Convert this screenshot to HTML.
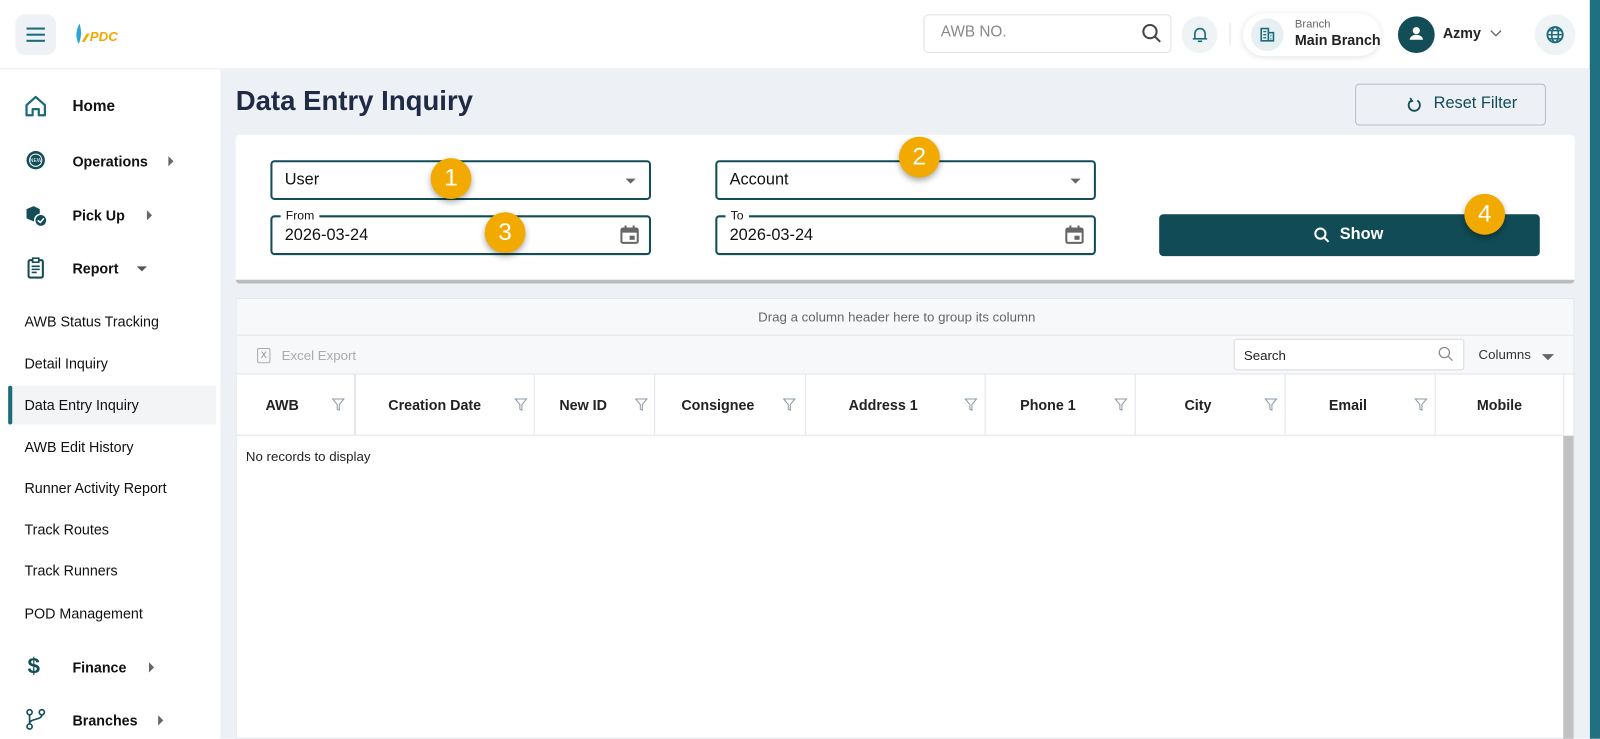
<!DOCTYPE html>
<html><head><meta charset="utf-8"><style>
html,body{margin:0;padding:0;width:1600px;height:739px;overflow:hidden;background:#fff;}
#s{position:absolute;left:0;top:0;width:1568px;height:724px;transform:scale(1.0204);transform-origin:0 0;font-family:"Liberation Sans",Arial,sans-serif;color:#111;}
.a{position:absolute;}
.nav{position:absolute;left:71px;font-size:14px;font-weight:bold;color:#111;}
.sub{position:absolute;left:24px;font-size:14px;color:#111;}
.tri-r{position:absolute;width:0;height:0;border-top:5px solid transparent;border-bottom:5px solid transparent;border-left:5px solid #666;}
.tri-d{position:absolute;width:0;height:0;border-left:5px solid transparent;border-right:5px solid transparent;border-top:5px solid #555;}
.field{position:absolute;border:2px solid #124d58;border-radius:4px;box-sizing:border-box;height:39px;font-size:16px;color:#111;}
.badge{position:absolute;width:40px;height:40px;border-radius:50%;background:#f2a900;color:#fff;font-size:24px;text-align:center;line-height:40px;box-shadow:0 3px 6px rgba(0,0,0,.35);}
.th{position:absolute;top:367px;height:60px;border-right:1px solid #e3e5ea;box-sizing:border-box;font-size:14px;font-weight:bold;color:#222;line-height:60px;text-align:center;}
.flt{position:absolute;top:23px;}
</style></head><body><div id="s">
<!-- header -->
<div class="a" style="left:0;top:0;width:1568px;height:67px;background:#fff;border-bottom:1px solid #e8eaee;"></div>
<div class="a" style="left:15px;top:14px;width:40px;height:40px;border-radius:10px;background:#eef2f6;"></div>
<div class="a" style="left:26px;top:27px;width:18px;height:2px;background:#1c6b7a;box-shadow:0 6px 0 #1c6b7a,0 12px 0 #1c6b7a;"></div>
<svg class="a" style="left:73px;top:22px" width="60" height="24"><path d="M5 1 C1 8 1 15 4 21 C7 15 7 8 5 1Z" fill="#2aa6d6"/><path d="M7 19 L12 11 L15 11 L10 19Z" fill="#f2a900"/><text x="15" y="18" font-family="Liberation Sans" font-weight="bold" font-style="italic" font-size="13" fill="#f2a900">PDC</text></svg>
<div class="a" style="left:905px;top:14px;width:243px;height:38px;border:1px solid #dde0e5;border-radius:5px;box-sizing:border-box;"></div>
<div class="a" style="left:922px;top:23px;font-size:15px;color:#888;">AWB NO.</div>
<svg class="a" style="left:1118px;top:22px" width="22" height="22"><circle cx="9" cy="9" r="6.5" fill="none" stroke="#444" stroke-width="2"/><path d="M14 14 L19 19" stroke="#444" stroke-width="2"/></svg>
<div class="a" style="left:1158px;top:16px;width:35px;height:36px;border-radius:50%;background:#eef3f6;"></div>
<svg class="a" style="left:1166px;top:24px" width="20" height="20"><path d="M5 14 V9 a5 5 0 0 1 10 0 V14 Z M3 14 H17 M8 16.5 H12" fill="none" stroke="#1c6b7a" stroke-width="1.6"/></svg>
<div class="a" style="left:1205px;top:22px;width:1px;height:22px;background:#e2e4e8;"></div>
<div class="a" style="left:1218px;top:13px;width:135px;height:42px;border-radius:21px;background:#fff;box-shadow:0 1px 6px rgba(0,0,0,.12);"></div>
<div class="a" style="left:1226px;top:18px;width:32px;height:32px;border-radius:50%;background:#e6f0f3;"></div>
<svg class="a" style="left:1234px;top:26px" width="16" height="16"><path d="M2 2 H9 V14 H2Z M9 6 H14 V14 H9" fill="none" stroke="#1c6b7a" stroke-width="1.6"/><path d="M4 5 H7 M4 8 H7 M4 11 H7 M11 9 H12 M11 12 H12" stroke="#1c6b7a" stroke-width="1.3"/></svg>
<div class="a" style="left:1269px;top:18px;font-size:11px;color:#666;">Branch</div>
<div class="a" style="left:1269px;top:31px;font-size:14px;font-weight:bold;color:#222;">Main Branch</div>
<div class="a" style="left:1370px;top:16px;width:36px;height:36px;border-radius:50%;background:#124d58;"></div>
<svg class="a" style="left:1378px;top:23px" width="20" height="20"><circle cx="10" cy="7" r="3.5" fill="#fff"/><path d="M3.5 16 a6.5 5 0 0 1 13 0Z" fill="#fff"/></svg>
<div class="a" style="left:1414px;top:24px;font-size:14px;font-weight:bold;color:#222;">Azmy</div>
<svg class="a" style="left:1460px;top:29px" width="12" height="8"><path d="M1 1 L6 6 L11 1" fill="none" stroke="#666" stroke-width="1.3"/></svg>
<div class="a" style="left:1504px;top:14px;width:40px;height:40px;border-radius:50%;background:#eef3f6;"></div>
<svg class="a" style="left:1514px;top:24px" width="20" height="20"><circle cx="10" cy="10" r="7.5" fill="none" stroke="#1c6b7a" stroke-width="1.8"/><ellipse cx="10" cy="10" rx="3.3" ry="7.5" fill="none" stroke="#1c6b7a" stroke-width="1.6"/><path d="M2.5 10 H17.5 M4 6 H16 M4 14 H16" stroke="#1c6b7a" stroke-width="1.4"/></svg>
<!-- right teal bar -->
<div class="a" style="left:1558px;top:0;width:10px;height:724px;background:#1f7080;"></div>
<!-- sidebar -->
<div class="a" style="left:0;top:68px;width:216px;height:656px;background:#fff;"></div>
<svg class="a" style="left:24px;top:93px" width="22" height="22"><path d="M2 10 L11 2 L20 10 V20 H14 V14 H8 V20 H2Z" fill="none" stroke="#1c6b7a" stroke-width="2.2" stroke-linejoin="round"/></svg>
<div class="nav" style="top:96px;font-size:15px;">Home</div>
<svg class="a" style="left:25px;top:147px" width="20" height="20"><circle cx="10" cy="10" r="9" fill="#124d58"/><circle cx="10" cy="10" r="6" fill="none" stroke="#fff" stroke-width="1"/><text x="10" y="12" font-size="5" fill="#fff" text-anchor="middle" font-family="Liberation Sans">NEW</text></svg>
<div class="nav" style="top:150px;">Operations</div><div class="tri-r" style="left:165px;top:153px"></div>
<svg class="a" style="left:24px;top:200px" width="24" height="24"><path d="M2 5 L9 2 L15 5 V14 L9 17 L2 14Z" fill="#124d58"/><circle cx="16" cy="16" r="6" fill="#124d58" stroke="#fff" stroke-width="1.5"/><path d="M13 16 L15.5 18 L19 14" stroke="#fff" stroke-width="1.5" fill="none"/></svg>
<div class="nav" style="top:203px;">Pick Up</div><div class="tri-r" style="left:144px;top:206px"></div>
<svg class="a" style="left:26px;top:252px" width="18" height="22"><rect x="2" y="3" width="14" height="17" rx="1.5" fill="none" stroke="#124d58" stroke-width="2"/><rect x="6" y="1" width="6" height="4" fill="#fff" stroke="#124d58" stroke-width="1.6"/><path d="M5 9 H13 M5 12 H13 M5 15 H10" stroke="#124d58" stroke-width="1.5"/></svg>
<div class="nav" style="top:255px;">Report</div><div class="tri-d" style="left:134px;top:261px"></div>
<div class="sub" style="top:307px;">AWB Status Tracking</div>
<div class="sub" style="top:348px;">Detail Inquiry</div>
<div class="a" style="left:8px;top:378px;width:204px;height:38px;background:#f3f4f5;"></div>
<div class="a" style="left:8px;top:378px;width:4px;height:38px;background:#1c6b7a;border-radius:2px;"></div>
<div class="sub" style="top:389px;">Data Entry Inquiry</div>
<div class="sub" style="top:430px;">AWB Edit History</div>
<div class="sub" style="top:470px;">Runner Activity Report</div>
<div class="sub" style="top:511px;">Track Routes</div>
<div class="sub" style="top:551px;">Track Runners</div>
<div class="sub" style="top:593px;">POD Management</div>
<div class="a" style="left:27px;top:640px;font-size:22px;font-weight:bold;color:#124d58;">$</div>
<div class="nav" style="top:646px;">Finance</div><div class="tri-r" style="left:146px;top:649px"></div>
<svg class="a" style="left:25px;top:694px" width="20" height="22"><circle cx="4" cy="4" r="2.5" fill="none" stroke="#124d58" stroke-width="1.6"/><circle cx="16" cy="4" r="2.5" fill="none" stroke="#124d58" stroke-width="1.6"/><circle cx="4" cy="18" r="2.5" fill="none" stroke="#124d58" stroke-width="1.6"/><path d="M4 6.5 V15.5 M16 6.5 C16 12 4 10 4 15" fill="none" stroke="#124d58" stroke-width="1.6"/></svg>
<div class="nav" style="top:698px;">Branches</div><div class="tri-r" style="left:155px;top:701px"></div>
<!-- main -->
<div class="a" style="left:216px;top:68px;width:1342px;height:656px;background:#edf0f5;"></div>
<div class="a" style="left:231px;top:84px;font-size:27px;font-weight:bold;color:#1f2a44;">Data Entry Inquiry</div>
<div class="a" style="left:1328px;top:82px;width:187px;height:41px;border:1px solid #b9bec6;border-radius:4px;box-sizing:border-box;background:#edf0f5;"></div>
<svg class="a" style="left:1378px;top:95px" width="16" height="16"><path d="M5 3.5 A5.5 5.5 0 1 0 11 3.5" fill="none" stroke="#124d58" stroke-width="1.8"/><path d="M4 1 L6 4 L3 5" fill="none" stroke="#124d58" stroke-width="1.6"/></svg>
<div class="a" style="left:1405px;top:93px;font-size:16px;color:#124d58;">Reset Filter</div>
<!-- filter card -->
<div class="a" style="left:231px;top:132px;width:1312px;height:146px;background:#fff;border-radius:4px;border-bottom:4px solid #bcbcbc;box-sizing:border-box;"></div>
<div class="field" style="left:265px;top:157px;width:373px;"><span class="a" style="left:12px;top:9px;">User</span><div class="tri-d" style="left:346px;top:16px;border-top-color:#666"></div></div>
<div class="field" style="left:701px;top:157px;width:373px;"><span class="a" style="left:12px;top:9px;">Account</span><div class="tri-d" style="left:346px;top:16px;border-top-color:#666"></div></div>
<div class="field" style="left:265px;top:211px;width:373px;"><span class="a" style="left:8px;top:-9px;font-size:12px;background:#fff;padding:0 5px;">From</span><span class="a" style="left:12px;top:9px;">2026-03-24</span>
<svg class="a" style="left:340px;top:7px" width="20" height="20"><rect x="2" y="4" width="16" height="14" rx="1.5" fill="none" stroke="#666" stroke-width="2"/><rect x="2" y="4" width="16" height="4" fill="#666"/><path d="M6 1 V4 M14 1 V4" stroke="#666" stroke-width="2"/><rect x="10" y="11" width="5" height="4" fill="#666"/></svg></div>
<div class="field" style="left:701px;top:211px;width:373px;"><span class="a" style="left:8px;top:-9px;font-size:12px;background:#fff;padding:0 5px;">To</span><span class="a" style="left:12px;top:9px;">2026-03-24</span>
<svg class="a" style="left:340px;top:7px" width="20" height="20"><rect x="2" y="4" width="16" height="14" rx="1.5" fill="none" stroke="#666" stroke-width="2"/><rect x="2" y="4" width="16" height="4" fill="#666"/><path d="M6 1 V4 M14 1 V4" stroke="#666" stroke-width="2"/><rect x="10" y="11" width="5" height="4" fill="#666"/></svg></div>
<div class="a" style="left:1136px;top:210px;width:373px;height:41px;background:#114b56;border-radius:4px;"></div>
<svg class="a" style="left:1287px;top:222px" width="18" height="18"><circle cx="7" cy="7" r="5" fill="none" stroke="#fff" stroke-width="2"/><path d="M11 11 L15 15" stroke="#fff" stroke-width="2"/></svg>
<div class="a" style="left:1313px;top:221px;font-size:16px;font-weight:bold;color:#fff;">Show</div>
<div class="badge" style="left:422px;top:155px;">1</div>
<div class="badge" style="left:881px;top:134px;">2</div>
<div class="badge" style="left:475px;top:208px;">3</div>
<div class="badge" style="left:1435px;top:190px;">4</div>
<!-- grid -->
<div class="a" style="left:231px;top:292px;width:1312px;height:432px;background:#fff;border:1px solid #e3e5ea;box-sizing:border-box;"></div>
<div class="a" style="left:232px;top:293px;width:1310px;height:74px;background:#f7f8fa;"></div>
<div class="a" style="left:232px;top:328px;width:1310px;height:1px;background:#e3e5ea;"></div>
<div class="a" style="left:232px;top:366px;width:1310px;height:1px;background:#e3e5ea;"></div>
<div class="a" style="left:743px;top:303px;font-size:13px;color:#666;">Drag a column header here to group its column</div>
<div class="a" style="left:252px;top:341px;width:11px;height:13px;border:1px solid #aaa;border-radius:2px;font-size:9px;color:#888;text-align:center;line-height:13px;">X</div>
<div class="a" style="left:276px;top:341px;font-size:13px;color:#aaa;">Excel Export</div>
<div class="a" style="left:1209px;top:332px;width:226px;height:31px;background:#fff;border:1px solid #d5d8dd;border-radius:3px;box-sizing:border-box;"></div>
<div class="a" style="left:1219px;top:341px;font-size:13px;color:#222;">Search</div>
<svg class="a" style="left:1409px;top:339px" width="16" height="16"><circle cx="6.5" cy="6.5" r="5" fill="none" stroke="#888" stroke-width="1.2"/><path d="M10 10 L14.5 14.5" stroke="#888" stroke-width="1.2"/></svg>
<div class="a" style="left:1449px;top:340px;font-size:13px;color:#333;">Columns</div>
<div class="tri-d" style="left:1511px;top:347px;border-top-color:#666;border-left-width:6px;border-right-width:6px;border-top-width:6px;"></div>
<div class="a" style="left:232px;top:426px;width:1300px;height:1px;background:#e3e5ea;"></div>
<div class="th" style="left:232px;width:116px;"><span style="margin-left:-26px">AWB</span><svg class="flt" style="left:93px" width="13" height="13"><path d="M1 1 H12 L7.5 6.5 V12 L5.5 11 V6.5Z" fill="none" stroke="#8a99a8" stroke-width="1"/></svg></div>
<div class="th" style="left:348px;width:176px;border-left:1px solid #e3e5ea;"><span style="margin-left:-20px">Creation Date</span><svg class="flt" style="left:155px" width="13" height="13"><path d="M1 1 H12 L7.5 6.5 V12 L5.5 11 V6.5Z" fill="none" stroke="#8a99a8" stroke-width="1"/></svg></div>
<div class="th" style="left:524px;width:118px;"><span style="margin-left:-22px">New ID</span><svg class="flt" style="left:98px" width="13" height="13"><path d="M1 1 H12 L7.5 6.5 V12 L5.5 11 V6.5Z" fill="none" stroke="#8a99a8" stroke-width="1"/></svg></div>
<div class="th" style="left:642px;width:148px;"><span style="margin-left:-24px">Consignee</span><svg class="flt" style="left:125px" width="13" height="13"><path d="M1 1 H12 L7.5 6.5 V12 L5.5 11 V6.5Z" fill="none" stroke="#8a99a8" stroke-width="1"/></svg></div>
<div class="th" style="left:790px;width:176px;"><span style="margin-left:-24px">Address 1</span><svg class="flt" style="left:155px" width="13" height="13"><path d="M1 1 H12 L7.5 6.5 V12 L5.5 11 V6.5Z" fill="none" stroke="#8a99a8" stroke-width="1"/></svg></div>
<div class="th" style="left:966px;width:147px;"><span style="margin-left:-24px">Phone 1</span><svg class="flt" style="left:126px" width="13" height="13"><path d="M1 1 H12 L7.5 6.5 V12 L5.5 11 V6.5Z" fill="none" stroke="#8a99a8" stroke-width="1"/></svg></div>
<div class="th" style="left:1113px;width:147px;"><span style="margin-left:-24px">City</span><svg class="flt" style="left:126px" width="13" height="13"><path d="M1 1 H12 L7.5 6.5 V12 L5.5 11 V6.5Z" fill="none" stroke="#8a99a8" stroke-width="1"/></svg></div>
<div class="th" style="left:1260px;width:147px;"><span style="margin-left:-24px">Email</span><svg class="flt" style="left:126px" width="13" height="13"><path d="M1 1 H12 L7.5 6.5 V12 L5.5 11 V6.5Z" fill="none" stroke="#8a99a8" stroke-width="1"/></svg></div>
<div class="th" style="left:1407px;width:126px;">Mobile</div>
<div class="a" style="left:241px;top:440px;font-size:13px;color:#222;">No records to display</div>
<div class="a" style="left:1532px;top:427px;width:10px;height:297px;background:#c1c1c1;"></div>
</div></body></html>
